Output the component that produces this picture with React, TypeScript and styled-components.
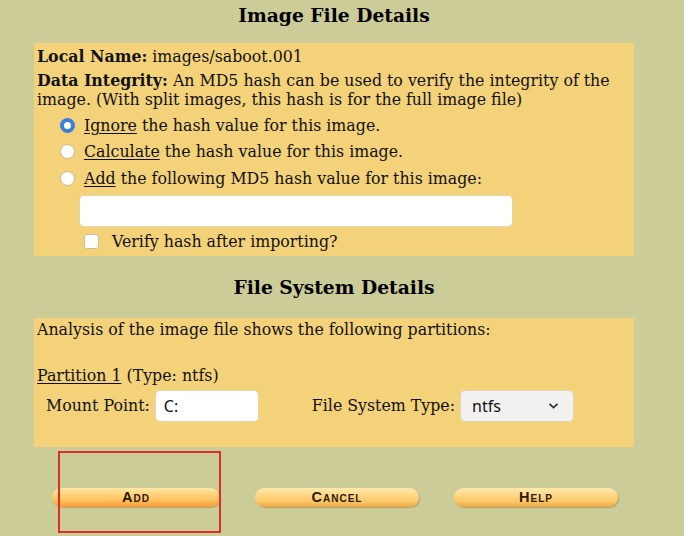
import React from "react";
import styled, { createGlobalStyle } from "styled-components";

const Global = createGlobalStyle`
  html, body { margin: 0; padding: 0; }
  body {
    background: #cccc99;
    font-family: "DejaVu Serif", serif;
    font-size: 15.8px;
    color: #111;
  }
`;

const Page = styled.div`
  width: 668px;
  display: flex;
  flex-direction: column;
  align-items: center;
`;

const Heading = styled.h3<{ $top: number; $bottom: number }>`
  font-family: "DejaVu Serif", serif;
  font-size: 18.7px;
  font-weight: bold;
  line-height: 22px;
  margin: ${(p) => p.$top}px 0 ${(p) => p.$bottom}px;
  color: #000;
`;

const Panel = styled.div<{ $pt: number; $pb: number }>`
  width: 600px;
  box-sizing: border-box;
  background: #f4d27a;
  padding: ${(p) => p.$pt}px 3px ${(p) => p.$pb}px 3px;
  display: flex;
  flex-direction: column;
`;

const Line = styled.div<{ $mt?: number }>`
  line-height: 19px;
  margin-top: ${(p) => p.$mt ?? 0}px;
`;

const Para = styled.div`
  line-height: 19px;
  margin-top: 5px;
`;

const OptionList = styled.div`
  display: flex;
  flex-direction: column;
  margin-top: 3px;
  padding-left: 23px;
`;

const OptionRow = styled.label`
  display: flex;
  align-items: center;
  height: 26.5px;
  gap: 9px;
`;

const Radio = styled.input.attrs({ type: "radio" })`
  appearance: none;
  margin: 0;
  width: 15px;
  height: 15px;
  border-radius: 50%;
  box-sizing: border-box;
  background: #fff;
  border: 1px solid #c9b98a;
  &:checked {
    background: #fff;
    border: 4px solid #3b7ddd;
  }
`;

const U = styled.span`
  text-decoration: underline;
  text-underline-offset: 2px;
`;

const HashInput = styled.input`
  margin: 3px 0 0 19px;
  width: 434px;
  height: 32px;
  box-sizing: border-box;
  border: 1px solid #e3d6ad;
  border-radius: 5px;
  background: #fff;
`;

const CheckRow = styled.label`
  display: flex;
  align-items: center;
  gap: 13px;
  height: 19px;
  margin: 5px 0 0 47px;
`;

const Check = styled.input.attrs({ type: "checkbox" })`
  appearance: none;
  margin: 0;
  width: 15px;
  height: 15px;
  box-sizing: border-box;
  border: 1px solid #cdbf95;
  border-radius: 3px;
  background: #fff;
`;

const MountRow = styled.div`
  display: flex;
  align-items: center;
  margin-top: 5px;
  padding-left: 9px;
  height: 32px;
`;

const FieldLabel = styled.span`
  margin-right: 5px;
`;

const TextBox = styled.input`
  width: 104px;
  height: 32px;
  box-sizing: border-box;
  border: 1px solid #e3d6ad;
  border-radius: 5px;
  background: #fff;
  font-family: "Noto Sans", sans-serif;
  font-size: 16px;
  padding: 0 8px;
  color: #111;
  margin-right: 53px;
`;

const SelectBox = styled.div`
  width: 114px;
  height: 32px;
  box-sizing: border-box;
  border: 1px solid #e0d5b4;
  border-radius: 5px;
  background: #f2f1ef;
  font-family: "Noto Sans", sans-serif;
  font-size: 16px;
  display: flex;
  align-items: center;
  justify-content: space-between;
  padding: 0 14px 0 11px;
  color: #111;
`;

const ButtonArea = styled.div`
  position: relative;
  width: 668px;
  height: 89px;
  display: flex;
  align-items: center;
  padding-left: 52px;
  box-sizing: border-box;
  gap: 35px;
`;

const PillButton = styled.button<{ $w: number; $hot?: boolean }>`
  width: ${(p) => p.$w}px;
  height: 19px;
  margin-top: 12px;
  border: none;
  border-radius: 10px;
  padding: 0;
  background: ${(p) =>
    p.$hot
      ? "linear-gradient(#ffe7a4 0%, #ffd27a 35%, #ffc060 65%, #f89a36 100%)"
      : "linear-gradient(#ffe9ad 0%, #ffd684 40%, #fcc868 70%, #eaa745 100%)"};
  box-shadow: 1px 1px 1px rgba(150, 110, 40, 0.45);
  font-family: "Liberation Sans", Arial, sans-serif;
  font-weight: bold;
  font-size: 14.5px;
  font-variant: small-caps;
  letter-spacing: 1px;
  color: #2a1a08;
  line-height: 19px;
`;

const Marker = styled.div`
  position: absolute;
  left: 58px;
  top: 4px;
  width: 163px;
  height: 82px;
  box-sizing: border-box;
  border: 2px solid #d9302b;
  pointer-events: none;
`;

const Chevron = () => (
  <svg width="11" height="8" viewBox="0 0 11 8">
    <path d="M1.5 1.8 L5.5 5.6 L9.5 1.8" fill="none" stroke="#333" strokeWidth="1.7" />
  </svg>
);

export default function App() {
  return (
    <>
      <Global />
      <Page>
        <Heading $top={4} $bottom={17}>Image File Details</Heading>
        <Panel $pt={4} $pb={5}>
          <Line>
            <b>Local Name:</b> images/saboot.001
          </Line>
          <Para>
            <b>Data Integrity:</b> An MD5 hash can be used to verify the integrity of the image. (With split images, this hash is for the full image file)
          </Para>
          <OptionList>
            <OptionRow>
              <Radio name="hash" defaultChecked />
              <span>
                <U>Ignore</U> the hash value for this image.
              </span>
            </OptionRow>
            <OptionRow>
              <Radio name="hash" />
              <span>
                <U>Calculate</U> the hash value for this image.
              </span>
            </OptionRow>
            <OptionRow>
              <Radio name="hash" />
              <span>
                <U>Add</U> the following MD5 hash value for this image:
              </span>
            </OptionRow>
            <HashInput />
          </OptionList>
          <CheckRow>
            <Check />
            <span>Verify hash after importing?</span>
          </CheckRow>
        </Panel>
        <Heading $top={20} $bottom={20}>File System Details</Heading>
        <Panel $pt={2} $pb={25}>
          <Line>Analysis of the image file shows the following partitions:</Line>
          <Line $mt={27}>
            <U>Partition 1</U> (Type: ntfs)
          </Line>
          <MountRow>
            <FieldLabel>Mount Point:</FieldLabel>
            <TextBox defaultValue="C:" />
            <FieldLabel>File System Type:</FieldLabel>
            <SelectBox>
              <span>ntfs</span>
              <Chevron />
            </SelectBox>
          </MountRow>
        </Panel>
        <ButtonArea>
          <PillButton $w={168} $hot>Add</PillButton>
          <PillButton $w={164}>Cancel</PillButton>
          <PillButton $w={164}>Help</PillButton>
          <Marker />
        </ButtonArea>
      </Page>
    </>
  );
}
